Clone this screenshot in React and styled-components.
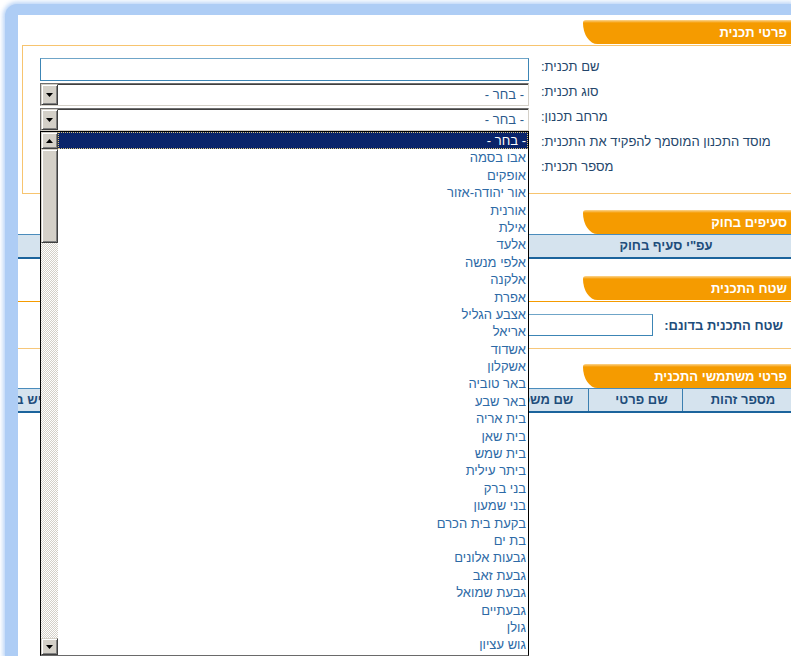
import React from "react";
import styled, { createGlobalStyle } from "styled-components";

const GlobalStyle = createGlobalStyle`
  html, body {
    margin: 0;
    padding: 0;
    background: #fff;
    overflow: hidden;
  }
  body {
    font-family: "Liberation Sans", "DejaVu Sans", Arial, sans-serif;
    font-size: 13px;
  }
`;

// Window chrome

const Screen = styled.div`
  width: 791px;
  height: 656px;
  box-sizing: border-box;
  padding: 4px 0 0 5px;
  overflow: hidden;
  background: #fff;
`;

const Frame = styled.div`
  height: 100%;
  box-sizing: border-box;
  padding: 11px 0 0 13px;
  background: #aecdf5;
  border-top-left-radius: 12px;
  box-shadow: 0 0 4px 2px rgba(174, 205, 245, 0.85);
`;

const Content = styled.div`
  position: relative;
  height: 100%;
  background: #fff;
  overflow: hidden;
  direction: rtl;
`;

// Section headers

const TabRow = styled.div`
  display: flex;
  padding-top: ${(p) => p.$top}px;
`;

const Tab = styled.div`
  width: 208px;
  height: 24px;
  box-sizing: border-box;
  padding-right: 4px;
  background: linear-gradient(#fcd590 0, #f59b00 3px, #f59b00 100%);
  border-radius: 3px 0 0 15px / 3px 0 0 22px;
  color: #fff;
  font-size: 13px;
  font-weight: bold;
  line-height: 25px;
  white-space: nowrap;
`;

// Plan details box

const FieldBox = styled.div`
  margin: 1px -6px 0 4px;
  padding: 11px 6px 11px 17px;
  border: 1px solid #f7c46f;
  display: grid;
  grid-template-columns: 1fr 489px;
  grid-auto-rows: 25px;
  column-gap: 12px;
`;

const Label = styled.div`
  line-height: 20px;
  text-align: left;
  color: #24466b;
  white-space: nowrap;
`;

const TextInput = styled.div`
  margin-top: ${(p) => (p.$flat ? 0 : 1)}px;
  width: ${(p) => p.$w || 489}px;
  height: ${(p) => p.$h || 23}px;
  box-sizing: border-box;
  border: 1px solid #3c85b5;
  border-top-color: #6fa5c8;
  background: #fff;
`;

const SelectBox = styled.div`
  margin-top: 1px;
  height: 23px;
  box-sizing: border-box;
  display: flex;
  direction: ltr;
  border: 1px solid;
  border-color: #6f6f6f #d4d0c8 #d4d0c8 #6f6f6f;
  box-shadow: inset 0 1px #404040;
  background: #fff;
`;

const SelectValue = styled.div`
  flex: 1;
  direction: rtl;
  padding-right: 4px;
  line-height: 22px;
  color: #2a5a8c;
`;

const ArrowButton = styled.div`
  flex: 0 0 auto;
  width: 17px;
  height: ${(p) => p.$h || 17}px;
  box-sizing: border-box;
  display: flex;
  align-items: center;
  justify-content: center;
  background: #d4d0c8;
  border: 1px solid;
  border-color: #d4d0c8 #404040 #404040 #d4d0c8;
  box-shadow: inset 1px 1px #fff, inset -1px -1px #808080;
`;

const Arrow = ({ up }) => (
  <svg width="7" height="4" viewBox="0 0 7 4">
    <polygon points={up ? "3.5,0 7,4 0,4" : "0,0 7,0 3.5,4"} fill="#000" />
  </svg>
);

const Select = ({ value }) => (
  <SelectBox>
    <ArrowButton $h={21}>
      <Arrow />
    </ArrowButton>
    <SelectValue>{value}</SelectValue>
  </SelectBox>
);

// Tables

const HeaderRow = styled.div`
  display: flex;
  height: 22px;
  background: #d5e3ee;
  border-top: 1px solid #4a8cbc;
  border-bottom: 2px solid #1c649c;
`;

const HeaderCell = styled.div`
  flex: 0 0 ${(p) => p.$w}px;
  box-sizing: border-box;
  padding-left: 12px;
  text-align: center;
  line-height: 22px;
  font-weight: bold;
  color: #1e4d7b;
  white-space: nowrap;
  border-left: ${(p) => (p.$divider ? "1px solid #3b7fb0" : "none")};
`;

// Plan area box

const AreaBox = styled.div`
  margin-top: 1px;
  padding: 12px 0;
  border-top: 1px solid #f59b00;
  border-bottom: 1px solid #f7c77a;
  display: flex;
  align-items: center;
  gap: 11px;
`;

const AreaLabel = styled.div`
  padding-right: 8px;
  font-weight: bold;
  color: #1e4d7b;
  white-space: nowrap;
`;

// Open dropdown list

const ListPopup = styled.div`
  position: absolute;
  left: 22px;
  top: 116px;
  width: 489px;
  height: 525px;
  box-sizing: border-box;
  display: flex;
  direction: ltr;
  background: #fff;
  border: 1px solid #000;
  border-bottom-color: #6a6a6a;
`;

const ScrollBar = styled.div`
  flex: 0 0 17px;
  display: flex;
  flex-direction: column;
`;

const Thumb = styled(ArrowButton)`
  height: 94px;
`;

const Track = styled.div`
  flex: 1;
  background: repeating-conic-gradient(#d4d0c8 0 25%, #fff 0 50%) 0 0 / 2px 2px;
`;

const Options = styled.div`
  flex: 1;
  direction: rtl;
  overflow: hidden;
`;

const Option = styled.div`
  height: 17.4px;
  box-sizing: border-box;
  padding-right: 2px;
  line-height: 17.4px;
  white-space: nowrap;
  color: ${(p) => (p.$selected ? "#fff" : "#2d6aa6")};
  background: ${(p) => (p.$selected ? "#0a246a" : "transparent")};
  outline: ${(p) => (p.$selected ? "1px dotted #d9c27a" : "none")};
  outline-offset: -1px;
`;

const councils = [
  "- בחר -",
  "אבו בסמה",
  "אופקים",
  "אור יהודה-אזור",
  "אורנית",
  "אילת",
  "אלעד",
  "אלפי מנשה",
  "אלקנה",
  "אפרת",
  "אצבע הגליל",
  "אריאל",
  "אשדוד",
  "אשקלון",
  "באר טוביה",
  "באר שבע",
  "בית אריה",
  "בית שאן",
  "בית שמש",
  "ביתר עילית",
  "בני ברק",
  "בני שמעון",
  "בקעת בית הכרם",
  "בת ים",
  "גבעות אלונים",
  "גבעת זאב",
  "גבעת שמואל",
  "גבעתיים",
  "גולן",
  "גוש עציון",
];

const planFields = [
  { label: "שם תכנית:", type: "text" },
  { label: "סוג תכנית:", type: "select" },
  { label: "מרחב תכנון:", type: "select" },
  { label: "מוסד התכנון המוסמך להפקיד את התכנית:", type: "select" },
  { label: "מספר תכנית:", type: "text" },
];

const userColumns = [
  { title: "מספר זהות", w: 109 },
  { title: "שם פרטי", w: 94 },
  { title: "שם משפחה", w: 112 },
  { title: "כתובת", w: 200 },
  { title: "טלפון", w: 130 },
  { title: "סוג מגיש בקשה", w: 236 },
];

export default function App() {
  return (
    <>
      <GlobalStyle />
      <Screen>
        <Frame>
          <Content>
            <TabRow $top={5}>
              <Tab>פרטי תכנית</Tab>
            </TabRow>
            <FieldBox>
              {planFields.map((field) => (
                <React.Fragment key={field.label}>
                  <Label>{field.label}</Label>
                  {field.type === "text" ? (
                    <TextInput />
                  ) : (
                    <Select value="- בחר -" />
                  )}
                </React.Fragment>
              ))}
            </FieldBox>

            <TabRow $top={16}>
              <Tab>סעיפים בחוק</Tab>
            </TabRow>
            <HeaderRow>
              <HeaderCell $w={262}>עפ"י סעיף בחוק</HeaderCell>
            </HeaderRow>

            <TabRow $top={17}>
              <Tab>שטח התכנית</Tab>
            </TabRow>
            <AreaBox>
              <AreaLabel>שטח התכנית בדונם:</AreaLabel>
              <TextInput $w={150} $h={22} $flat />
            </AreaBox>

            <TabRow $top={15}>
              <Tab>פרטי משתמשי התכנית</Tab>
            </TabRow>
            <HeaderRow>
              {userColumns.map((col, i) => (
                <HeaderCell
                  key={col.title}
                  $w={col.w}
                  $divider={i < userColumns.length - 1}
                >
                  {col.title}
                </HeaderCell>
              ))}
            </HeaderRow>

            <ListPopup>
              <ScrollBar>
                <ArrowButton>
                  <Arrow up />
                </ArrowButton>
                <Thumb />
                <Track />
                <ArrowButton>
                  <Arrow />
                </ArrowButton>
              </ScrollBar>
              <Options>
                {councils.map((name, i) => (
                  <Option key={name} $selected={i === 0}>
                    {name}
                  </Option>
                ))}
              </Options>
            </ListPopup>
          </Content>
        </Frame>
      </Screen>
    </>
  );
}
